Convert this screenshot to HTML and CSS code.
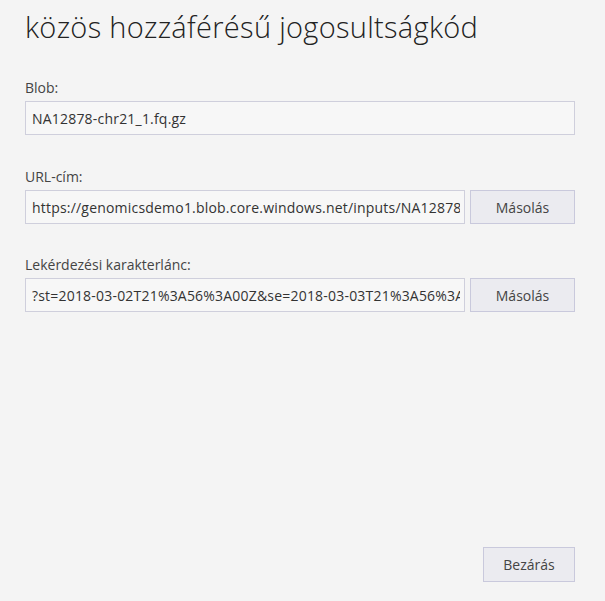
FILE: index.html
```html
<!DOCTYPE html>
<html lang="hu">
<head>
<meta charset="utf-8">
<title>közös hozzáférésű jogosultságkód</title>
<link rel="stylesheet" href="styles.css">
</head>
<body>
<div class="panel">
  <h1 class="title">közös hozzáférésű jogosultságkód</h1>
  <div class="fields">
    <div class="field field-blob">
      <label class="label" for="blob">Blob:</label>
      <div class="row">
        <input class="input" id="blob" type="text" readonly value="NA12878-chr21_1.fq.gz">
      </div>
    </div>
    <div class="field">
      <label class="label" for="url">URL-cím:</label>
      <div class="row">
        <input class="input" id="url" type="text" readonly value="https://genomicsdemo1.blob.core.windows.net/inputs/NA12878-chr21_1.fq.gz">
        <button class="btn copy">Másolás</button>
      </div>
    </div>
    <div class="field">
      <label class="label" for="query">Lekérdezési karakterlánc:</label>
      <div class="row">
        <input class="input" id="query" type="text" readonly value="?st=2018-03-02T21%3A56%3A00Z&amp;se=2018-03-03T21%3A56%3A00Z&amp;sp=r&amp;sv=2017-04-17&amp;sr=b">
        <button class="btn copy">Másolás</button>
      </div>
    </div>
  </div>
  <div class="footer">
    <button class="btn close">Bezárás</button>
  </div>
</div>
</body>
</html>
```
FILE: styles.css
```css
html, body {
  margin: 0;
  padding: 0;
  background: #f4f4f4;
}
body {
  font-family: "Open Sans", "Noto Sans", sans-serif;
  color: #333;
}
.panel {
  box-sizing: border-box;
  height: 601px;
  padding: 9px 30px 19px 25px;
  display: flex;
  flex-direction: column;
}
.title {
  margin: 0;
  font-size: 29px;
  letter-spacing: 0.3px;
  line-height: 36px;
  font-weight: 300;
  color: #222;
  white-space: nowrap;
}
.fields {
  margin-top: 33px;
  display: flex;
  flex-direction: column;
  gap: 31px;
}
.field-blob {
  margin-bottom: 1px;
}
.field {
  display: flex;
  flex-direction: column;
  gap: 3px;
}
.label {
  font-size: 14px;
  line-height: 20px;
  color: #444;
}
.row {
  display: flex;
  gap: 5px;
}
.input {
  flex: 1;
  width: auto;
  min-width: 0;
  box-sizing: border-box;
  height: 34px;
  margin: 0;
  border: 1px solid #cfcfdc;
  border-radius: 0;
  background: #f7f7f7;
  padding: 0 4px 0 6px;
  font-family: inherit;
  font-size: 14px;
  letter-spacing: 0.2px;
  color: #333;
  outline: none;
}
.btn {
  box-sizing: border-box;
  margin: 0;
  border: 1px solid #c9c9dc;
  border-radius: 0;
  background: #ebebf0;
  font-family: inherit;
  font-size: 14px;
  color: #444;
  padding: 0;
  cursor: pointer;
}
.copy {
  width: 105px;
  height: 34px;
  flex: none;
}
.footer {
  margin-top: auto;
  display: flex;
  justify-content: flex-end;
}
.close {
  width: 92px;
  height: 35px;
}
```
